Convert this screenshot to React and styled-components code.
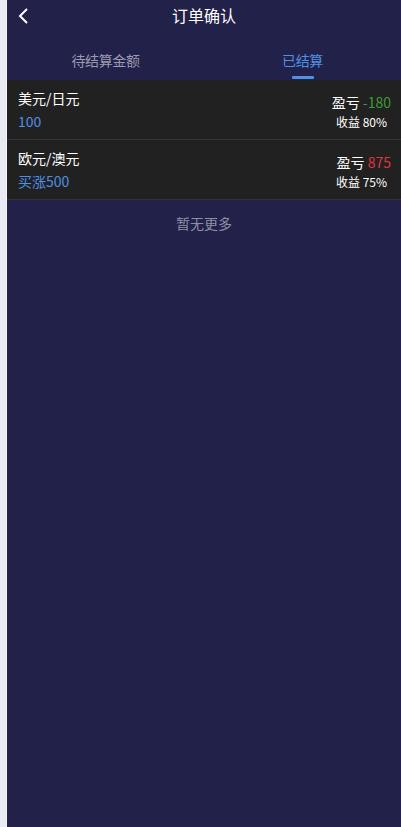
import React, { useState } from 'react';
import styled, { createGlobalStyle } from 'styled-components';

const GlobalStyle = createGlobalStyle`
  html, body {
    margin: 0;
    padding: 0;
    background: #eceff4;
    font-family: "Noto Sans CJK SC", "Noto Sans", sans-serif;
  }
`;

const Page = styled.div`
  display: flex;
  min-height: 827px;
`;

const SideStrip = styled.div`
  width: 7px;
  flex-shrink: 0;
  background: #e8ebf1;
  border-right: 1px solid #f3f5f8;
  box-sizing: border-box;
`;

const Main = styled.div`
  flex: 1;
  background: #22214a;
  display: flex;
  flex-direction: column;
`;

const Header = styled.div`
  position: relative;
  height: 33px;
  box-sizing: border-box;
  padding-bottom: 3px;
  display: flex;
  align-items: center;
  justify-content: center;
  color: #fff;
  font-size: 16px;
`;

const BackButton = styled.span`
  position: absolute;
  left: 10px;
  top: 7px;
  display: flex;
`;

const Tabs = styled.div`
  display: flex;
  height: 47px;
`;

const Tab = styled.div`
  flex: 1;
  display: flex;
  flex-direction: column;
  align-items: center;
  justify-content: flex-end;
  font-size: 14px;
  letter-spacing: -0.4px;
  color: ${p => (p.$active ? '#4f8fe6' : '#9a9ab0')};
`;

const TabLabel = styled.span`
  line-height: 20px;
  margin-bottom: 6px;
`;

const TabBar = styled.span`
  width: 22px;
  height: 3px;
  border-radius: 1px;
  background: ${p => (p.$active ? '#4f8fe6' : 'transparent')};
  margin-bottom: 1px;
`;

const Row = styled.div`
  display: flex;
  justify-content: space-between;
  align-items: center;
  height: 59px;
  padding: 0 10px 0 11px;
  background: #212121;
  border-bottom: 1px solid #333338;
`;

const Left = styled.div`
  display: flex;
  flex-direction: column;
  gap: 3px;
`;

const Pair = styled.span`
  color: #fff;
  font-size: 14px;
  line-height: 20px;
`;

const Amount = styled.span`
  color: #4f8fe6;
  font-size: 14px;
  line-height: 20px;
`;

const Right = styled.div`
  display: flex;
  flex-direction: column;
  align-items: flex-end;
  gap: 1px;
  margin-top: 3px;
`;

const Profit = styled.span`
  color: #fff;
  font-size: 14px;
  line-height: 19px;
`;

const ProfitValue = styled.span`
  color: ${p => (p.$loss ? '#3e9b38' : '#e0343f')};
`;

const Yield = styled.span`
  color: #fff;
  font-size: 12px;
  line-height: 17px;
  margin-right: 4px;
`;

const Empty = styled.div`
  text-align: center;
  color: #8e8ea4;
  font-size: 14px;
  padding-top: 13px;
`;

const orders = [
  { pair: '美元/日元', amount: '100', profit: '-180', rate: '80%' },
  { pair: '欧元/澳元', amount: '买涨500', profit: '875', rate: '75%' },
];

export default function App() {
  const [tab, setTab] = useState(1);
  return (
    <>
      <GlobalStyle />
      <Page>
        <SideStrip />
        <Main>
          <Header>
            <BackButton>
              <svg width="14" height="18" viewBox="0 0 14 18">
                <path d="M10 2 L3 9 L10 16" fill="none" stroke="#fff" strokeWidth="2" />
              </svg>
            </BackButton>
            订单确认
          </Header>
          <Tabs>
            {['待结算金额', '已结算'].map((t, i) => (
              <Tab key={t} $active={tab === i} onClick={() => setTab(i)}>
                <TabLabel>{t}</TabLabel>
                <TabBar $active={tab === i} />
              </Tab>
            ))}
          </Tabs>
          {orders.map(o => (
            <Row key={o.pair}>
              <Left>
                <Pair>{o.pair}</Pair>
                <Amount>{o.amount}</Amount>
              </Left>
              <Right>
                <Profit>
                  盈亏 <ProfitValue $loss={o.profit.startsWith('-')}>{o.profit}</ProfitValue>
                </Profit>
                <Yield>收益 {o.rate}</Yield>
              </Right>
            </Row>
          ))}
          <Empty>暂无更多</Empty>
        </Main>
      </Page>
    </>
  );
}
